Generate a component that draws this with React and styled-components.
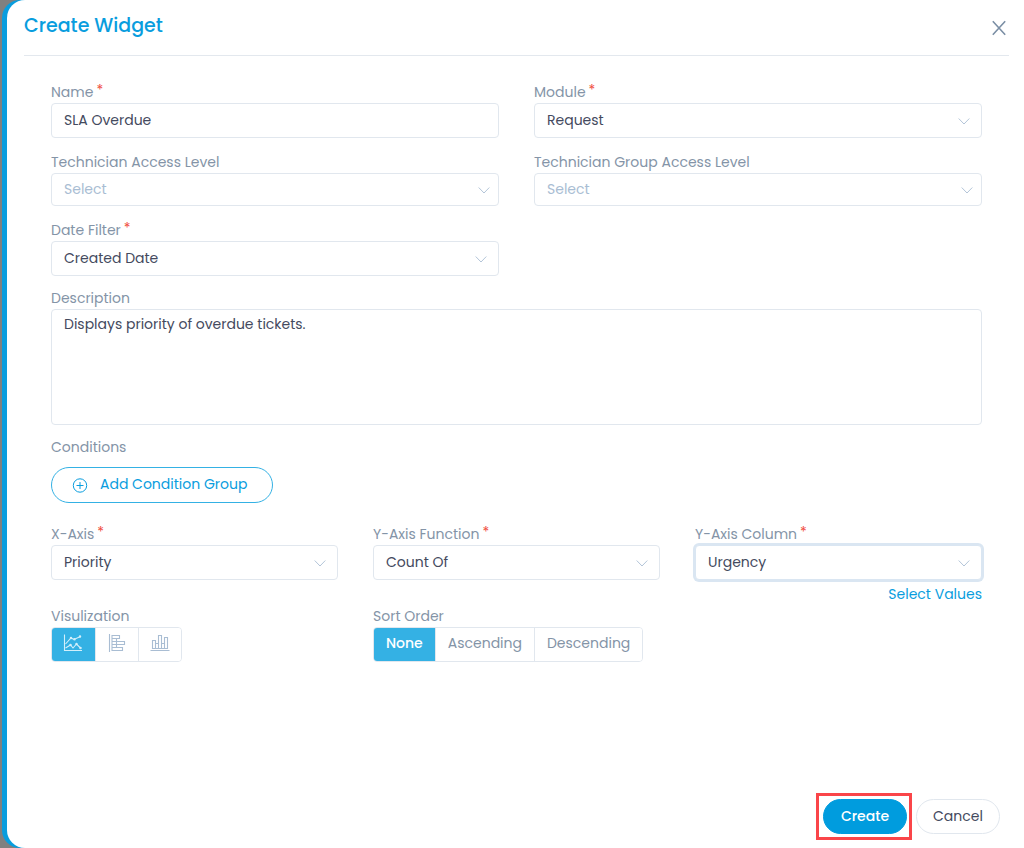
import React, { useState } from 'react';
import styled, { createGlobalStyle } from 'styled-components';

const GlobalStyle = createGlobalStyle`
  *, *::before, *::after {
    box-sizing: border-box;
  }

  body {
    margin: 0;
    background: #808080;
    font-family: Poppins, Inter, 'Open Sans', sans-serif;
    font-size: 14px;
    color: #444a5e;
  }

  button, input, select, textarea {
    font: inherit;
    color: inherit;
    margin: 0;
  }
`;

// Drawer
const Drawer = styled.section`
  display: flex;
  flex-direction: column;
  min-height: 100vh;
  margin-left: 7px;
  padding: 0 15px 8px 17px;
  background: #ffffff;
  border-radius: 18px 0 0 18px;
  box-shadow: -5px 0 0 #099dde;
`;

const Header = styled.header`
  display: flex;
  align-items: center;
  justify-content: space-between;
  height: 56px;
  padding-right: 3px;
  border-bottom: 1px solid #e3e8ee;
`;

const Title = styled.h1`
  margin: 0;
  padding-bottom: 3px;
  font-size: 19px;
  line-height: 28px;
  font-weight: 500;
  color: #099dde;
`;

const CloseButton = styled.button`
  display: flex;
  padding: 0;
  border: none;
  background: none;
  color: #7b8fa5;
  cursor: pointer;
`;

const Form = styled.form`
  display: flex;
  flex: 1;
  flex-direction: column;
`;

const FormBody = styled.div`
  display: flex;
  flex-direction: column;
  flex: 1;
  padding: 26px 27px;
`;

const Row = styled.div`
  display: grid;
  grid-template-columns: repeat(${({ $columns }) => $columns || 1}, minmax(0, 1fr));
  column-gap: 35px;
  margin-bottom: ${({ $space }) => $space || 14}px;
`;

// Fields
const Field = styled.div`
  display: flex;
  flex-direction: column;
  align-items: stretch;
`;

const Label = styled.label`
  font-size: 14px;
  line-height: 21px;
  color: #8494a7;
`;

const Required = styled.sup`
  margin-left: 3px;
  font-size: 14px;
  line-height: 0;
  vertical-align: 2px;
  color: #f04e3e;
`;

const controlStyles = `
  width: 100%;
  padding: 0 12px;
  border: 1px solid #e1e7ee;
  border-radius: 4px;
  background: #ffffff;
  outline: none;
`;

const TextInput = styled.input`
  ${controlStyles}
  height: 35px;
`;

const TextArea = styled.textarea`
  ${controlStyles}
  display: block;
  height: 116px;
  padding: 4px 12px;
  line-height: 20px;
  resize: none;
`;

const SelectWrapper = styled.div`
  position: relative;
`;

const SelectInput = styled.select`
  ${controlStyles}
  display: block;
  height: ${({ $placeholder }) => ($placeholder ? 33 : 35)}px;
  padding-bottom: 2px;
  appearance: none;
  color: ${({ $placeholder }) => ($placeholder ? '#a9bdd3' : '#444a5e')};
  border-color: ${({ $active }) => ($active ? '#dae6f2' : '#e1e7ee')};
  box-shadow: ${({ $active }) => ($active ? '0 0 0 2px #dae6f2' : 'none')};
`;

const Arrow = styled.svg`
  position: absolute;
  top: 50%;
  right: ${({ $placeholder }) => ($placeholder ? 9 : 12)}px;
  width: 12px;
  height: 8px;
  margin-top: -4px;
  pointer-events: none;
`;

const ValuesLink = styled.a`
  align-self: flex-end;
  margin-top: 4px;
  line-height: 21px;
  color: #099dde;
  text-decoration: none;
`;

const Group = styled.fieldset`
  min-width: 0;
  margin: 0;
  padding: 0;
  border: none;
`;

const GroupLabel = styled.legend`
  padding: 0;
  line-height: 21px;
  color: #8494a7;
`;

const ConditionButton = styled.button`
  display: flex;
  align-items: center;
  gap: 12px;
  height: 36px;
  margin-top: 9px;
  padding: 0 25px 1px 20px;
  border: 1px solid #34b1e4;
  border-radius: 18px;
  background: #ffffff;
  color: #099dde;
  cursor: pointer;
`;

const Segments = styled.div`
  display: inline-flex;
  height: 35px;
  border: 1px solid #e1e7ee;
  border-radius: 4px;
  overflow: hidden;
`;

const Segment = styled.button`
  display: flex;
  align-items: center;
  justify-content: center;
  padding: 0 12px 2px;
  border: none;
  border-left: 1px solid #e1e7ee;
  background: ${({ $selected }) => ($selected ? '#34b1e4' : '#ffffff')};
  color: ${({ $selected }) => ($selected ? '#ffffff' : '#8494a7')};
  font-weight: ${({ $selected }) => ($selected ? 500 : 400)};
  cursor: pointer;

  &:first-child {
    border-left: none;
  }
`;

const IconSegment = styled(Segment)`
  width: 43px;
  padding: 0 1px 3px 0;
  color: ${({ $selected }) => ($selected ? '#d3effa' : '#a9bdd3')};
`;

// Footer
const Footer = styled.footer`
  display: flex;
  align-items: center;
  justify-content: flex-end;
  gap: 4px;
  padding-right: 9px;
`;

const Highlight = styled.div`
  padding: 3px 2px 3px 4px;
  border: 3px solid #fa4549;
`;

const PillButton = styled.button`
  height: 35px;
  min-width: 84px;
  padding: 0 16px 1px;
  border: 1px solid ${({ $primary }) => ($primary ? '#009cde' : '#e1e7ee')};
  border-radius: 18px;
  background: ${({ $primary }) => ($primary ? '#009cde' : '#ffffff')};
  color: ${({ $primary }) => ($primary ? '#ffffff' : '#444a5e')};
  font-weight: ${({ $primary }) => ($primary ? 500 : 400)};
  cursor: pointer;
`;

const CloseIcon = () => (
  <svg width="14" height="16" viewBox="0 0 14 16" fill="none" stroke="currentColor" strokeWidth="1.6">
    <path d="M0.8 1.2 13.2 14.8M13.2 1.2 0.8 14.8" />
  </svg>
);

const PlusCircleIcon = () => (
  <svg width="16" height="16" viewBox="0 0 16 16" fill="none" stroke="currentColor">
    <circle cx="8" cy="8.5" r="6.7" />
    <path d="M8 5v7M4.5 8.5h7" />
  </svg>
);

const LineChartIcon = () => (
  <svg width="20" height="18" viewBox="0 0 20 18" fill="none" stroke="currentColor" strokeWidth="1.1">
    <path d="M1.5 0.5v16h17.5" />
    <path d="M2.5 10 8 4l3 1.5 6.5-3" />
    <path d="M2.5 14 7.5 11l2.5 3 3.5-4 4 4" />
    <circle cx="8" cy="4" r="0.7" />
    <circle cx="11.5" cy="5.2" r="0.7" />
    <circle cx="17" cy="2.5" r="0.7" />
    <circle cx="7.5" cy="11" r="0.7" />
    <circle cx="13.5" cy="10" r="0.7" />
    <circle cx="17.5" cy="14" r="0.7" />
  </svg>
);

const BarListIcon = () => (
  <svg width="18" height="18" viewBox="0 0 18 18" fill="none" stroke="currentColor" strokeWidth="1.1">
    <path d="M1.5 0v18" />
    <path d="M4 1.5h7.5v3H4zM4 4.5h4.5v3H4zM8.5 7.5h8v3h-8zM4 10.5h4.5M8.5 10.5v3M4 7.5v3M4 13.5h10.5v3H4zM4 10.5v3" />
  </svg>
);

const ColumnChartIcon = () => (
  <svg width="20" height="18" viewBox="0 0 20 18" fill="none" stroke="currentColor" strokeWidth="1.1">
    <path d="M0.5 16.5h19" />
    <path d="M2.5 14.5v-8h3v8zM5.5 14.5v-5h3v5M8.5 14.5v-13h3v13M11.5 9.5h3M14.5 14.5v-11h3v11zM5.5 14.5h9" />
  </svg>
);

const SelectField = ({ id, label, required, value, placeholder, active, children }) => (
  <Field>
    <Label htmlFor={id}>
      {label}
      {required && <Required>*</Required>}
    </Label>
    <SelectWrapper>
      <SelectInput id={id} defaultValue={value || ''} $placeholder={placeholder} $active={active}>
        <option value={value || ''}>{value || 'Select'}</option>
      </SelectInput>
      <Arrow $placeholder={placeholder} viewBox="0 0 12 8" fill="none" stroke="#b3c5d8" aria-hidden="true">
        <path d="M0.7 1.5 6 7 11.3 1.5" />
      </Arrow>
    </SelectWrapper>
    {children}
  </Field>
);

const charts = [
  { name: 'line', Icon: LineChartIcon },
  { name: 'bar', Icon: BarListIcon },
  { name: 'column', Icon: ColumnChartIcon },
];

const sortOrders = ['None', 'Ascending', 'Descending'];

const App = () => {
  const [chart, setChart] = useState('line');
  const [sortOrder, setSortOrder] = useState('None');

  return (
    <>
      <GlobalStyle />
      <Drawer>
        <Header>
          <Title>Create Widget</Title>
          <CloseButton type="button" aria-label="Close">
            <CloseIcon />
          </CloseButton>
        </Header>

        <Form onSubmit={(e) => e.preventDefault()}>
          <FormBody>
            <Row $columns={2}>
              <Field>
                <Label htmlFor="name">
                  Name<Required>*</Required>
                </Label>
                <TextInput id="name" defaultValue="SLA Overdue" />
              </Field>
              <SelectField id="module" label="Module" value="Request" required />
            </Row>

            <Row $columns={2}>
              <SelectField id="technician" label="Technician Access Level" placeholder />
              <SelectField id="technician-group" label="Technician Group Access Level" placeholder />
            </Row>

            <Row $columns={2} $space={12}>
              <SelectField id="date-filter" label="Date Filter" value="Created Date" required />
            </Row>

            <Row $space={12}>
              <Field>
                <Label htmlFor="description">Description</Label>
                <TextArea id="description" defaultValue="Displays priority of overdue tickets." />
              </Field>
            </Row>

            <Row $space={21}>
              <Group>
                <GroupLabel>Conditions</GroupLabel>
                <ConditionButton type="button">
                  <PlusCircleIcon />
                  Add Condition Group
                </ConditionButton>
              </Group>
            </Row>

            <Row $columns={3} $space={1}>
              <SelectField id="x-axis" label="X-Axis" value="Priority" required />
              <SelectField id="y-function" label="Y-Axis Function" value="Count Of" required />
              <SelectField id="y-column" label="Y-Axis Column" value="Urgency" required active>
                <ValuesLink href="#values">Select Values</ValuesLink>
              </SelectField>
            </Row>

            <Row $columns={3}>
              <Group>
                <GroupLabel>Visulization</GroupLabel>
                <Segments>
                  {charts.map(({ name, Icon }) => (
                    <IconSegment
                      key={name}
                      type="button"
                      aria-label={name}
                      $selected={chart === name}
                      onClick={() => setChart(name)}
                    >
                      <Icon />
                    </IconSegment>
                  ))}
                </Segments>
              </Group>
              <Group>
                <GroupLabel>Sort Order</GroupLabel>
                <Segments>
                  {sortOrders.map((order) => (
                    <Segment
                      key={order}
                      type="button"
                      $selected={sortOrder === order}
                      onClick={() => setSortOrder(order)}
                    >
                      {order}
                    </Segment>
                  ))}
                </Segments>
              </Group>
            </Row>
          </FormBody>

          <Footer>
            <Highlight>
              <PillButton type="submit" $primary>
                Create
              </PillButton>
            </Highlight>
            <PillButton type="button">Cancel</PillButton>
          </Footer>
        </Form>
      </Drawer>
    </>
  );
};

export default App;
